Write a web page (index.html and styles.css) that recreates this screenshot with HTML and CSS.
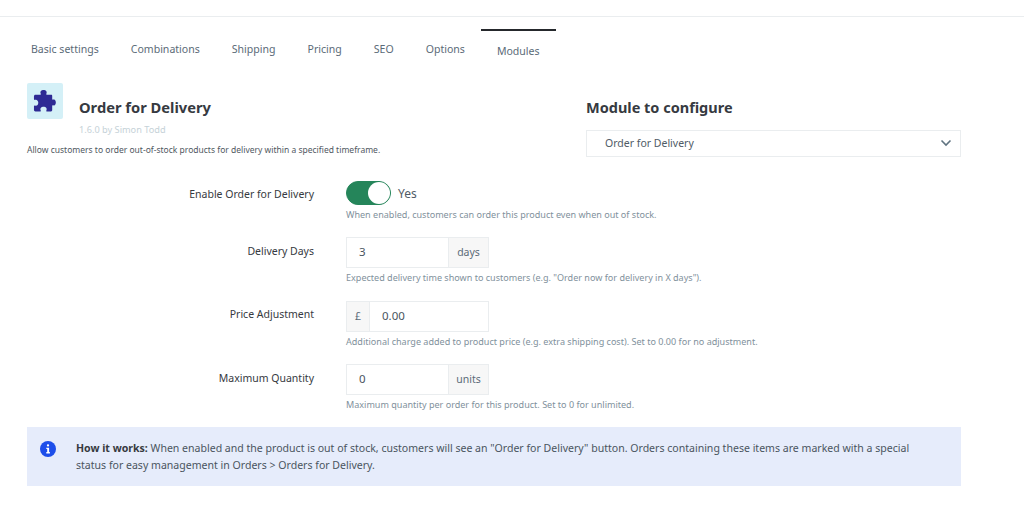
FILE: index.html
```html
<!DOCTYPE html>
<html>
<head>
    <title>Order for Delivery</title>
    <link rel="stylesheet" href="styles.css">
</head>
<body>
    <div class="top-rule"></div>

    <ul class="tabs">
        <li class="tab">Basic settings</li>
        <li class="tab">Combinations</li>
        <li class="tab">Shipping</li>
        <li class="tab">Pricing</li>
        <li class="tab">SEO</li>
        <li class="tab">Options</li>
        <li class="tab tab-active">Modules</li>
    </ul>

    <div class="head-row">
        <div class="module-info">
            <div class="module-title-row">
                <div class="module-logo">
                    <svg width="24" height="24" viewBox="0 0 25 24">
                        <path fill="#2e2a94" d="M2.5 5.5H7.5C8.2 5.5 8.3 4.8 8 4.2C7 2.2 8.8.5 11 .5S15 2.2 14 4.2C13.7 4.8 13.8 5.5 14.5 5.5H19C19.8 5.5 20 6 20 6.8V10C20 10.7 20.6 10.8 21.2 10.5C22.8 9.7 23.8 11.7 23.8 13.5S22.8 17.3 21.2 16.5C20.6 16.2 20 16.3 20 17V21.5C20 22.3 19.500 23 18.800 23H14.500C13.800 23 13.700 22.300 14 21.700C15 19.700 13.200 18 11 18S7 19.700 8 21.700C8.300 22.300 8.200 23 7.500 23H2.500C1.700 23 1 22.300 1 21.500V17.500C1 16.800 1.600 16.500 2.200 16.800C3.800 17.600 5.500 16 5.500 13.800S3.800 10 2.200 10.800C1.600 11.100 1 10.800 1 10V7C1 6.200 1.700 5.500 2.500 5.500Z"/>
                    </svg>
                </div>
                <h2 class="module-name">Order for Delivery</h2>
            </div>
            <div class="module-version">1.6.0 by Simon Todd</div>
            <p class="module-desc">Allow customers to order out-of-stock products for delivery within a specified timeframe.</p>
        </div>
        <div class="module-picker">
            <h2 class="picker-title">Module to configure</h2>
            <div class="picker-select">
                <span>Order for Delivery</span>
                <svg width="12" height="8" viewBox="0 0 12 8">
                    <path d="M1.5 1.5 6 6l4.5-4.5" fill="none" stroke="#5f7380" stroke-width="1.6"/>
                </svg>
            </div>
        </div>
    </div>

    <div class="form-row row-toggle">
        <label class="form-label">Enable Order for Delivery</label>
        <div class="form-field">
            <div class="switch-line">
                <span class="switch"><span class="knob"></span></span>
                <span class="switch-text">Yes</span>
            </div>
            <small class="hint">When enabled, customers can order this product even when out of stock.</small>
        </div>
    </div>

    <div class="form-row">
        <label class="form-label">Delivery Days</label>
        <div class="form-field">
            <div class="input-group">
                <span class="input-value grow">3</span>
                <span class="addon addon-right">days</span>
            </div>
            <small class="hint">Expected delivery time shown to customers (e.g. "Order now for delivery in X days").</small>
        </div>
    </div>

    <div class="form-row row-price">
        <label class="form-label">Price Adjustment</label>
        <div class="form-field">
            <div class="input-group">
                <span class="addon addon-left">£</span>
                <span class="input-value grow">0.00</span>
            </div>
            <small class="hint">Additional charge added to product price (e.g. extra shipping cost). Set to 0.00 for no adjustment.</small>
        </div>
    </div>

    <div class="form-row">
        <label class="form-label">Maximum Quantity</label>
        <div class="form-field">
            <div class="input-group">
                <span class="input-value grow">0</span>
                <span class="addon addon-right">units</span>
            </div>
            <small class="hint">Maximum quantity per order for this product. Set to 0 for unlimited.</small>
        </div>
    </div>

    <div class="info-box">
        <svg class="info-icon" width="16" height="16" viewBox="0 0 16 16">
            <circle cx="8" cy="8" r="8" fill="#1d4eea"/>
            <rect x="6.9" y="3.3" width="2.2" height="2.2" rx="1" fill="#fff"/>
            <path d="M6.3 6.8h2.8v4.3h.8v1.3H6.3v-1.3h.9V8.1h-.9z" fill="#fff"/>
        </svg>
        <p><strong>How it works:</strong> When enabled and the product is out of stock, customers will see an "Order for Delivery" button. Orders containing these items are marked with a special status for easy management in Orders &gt; Orders for Delivery.</p>
    </div>
</body>
</html>
```

FILE: styles.css
```css
body {
    margin: 0;
    padding-top: 16px;
    background: #fff;
    color: #363a41;
    font-family: "Noto Sans", "Open Sans", sans-serif;
    font-size: 10.5px;
}

.top-rule {
    border-top: 1px solid #eaedef;
}

/* Tabs */
.tabs {
    display: flex;
    list-style: none;
    margin: 12px 0 0 15px;
    padding: 0;
}

.tab {
    padding: 10px 16px 0;
    height: 38px;
    box-sizing: border-box;
    color: #5b6b78;
    font-size: 10.55px;
    line-height: 16px;
    border-top: 2px solid transparent;
}

.tab-active {
    padding-top: 12px;
    border-top-color: #25282c;
}

/* Module header */
.head-row {
    display: flex;
    margin: 16px 0 0 27px;
}

.module-info {
    width: 559px;
}

.module-title-row {
    display: flex;
    align-items: flex-end;
}

.module-logo {
    display: flex;
    align-items: center;
    justify-content: center;
    width: 36px;
    height: 36px;
    background: #d4f0f7;
    border-radius: 2px;
}

.module-name {
    margin: 0 0 3px 16px;
    font-size: 14.7px;
    line-height: 18px;
    font-weight: 700;
}

.module-version {
    margin: 5px 0 0 52px;
    color: #c6d2d8;
    font-size: 9.2px;
    line-height: 12px;
}

.module-desc {
    margin: 8px 0 0;
    color: #50585f;
    font-size: 8.5px;
    line-height: 12px;
}

.module-picker {
    width: 375px;
}

.picker-title {
    margin: 14px 0 0;
    font-size: 14.5px;
    line-height: 20px;
    font-weight: 700;
}

.picker-select {
    display: flex;
    align-items: center;
    justify-content: space-between;
    box-sizing: border-box;
    height: 27px;
    margin-top: 13px;
    padding: 0 8px 2px 18px;
    border: 1px solid #eaedef;
    color: #4f5b66;
}

/* Form rows */
.form-row {
    display: flex;
    margin-top: 16px;
}

.row-toggle {
    margin-top: 24px;
}

.row-price {
    margin-top: 17px;
}

.form-label {
    width: 314px;
    padding-top: 6px;
    text-align: right;
    line-height: 16px;
}

.row-toggle .form-label,
.row-price .form-label {
    padding-top: 5px;
}

.form-field {
    margin-left: 32px;
}

.switch-line {
    display: flex;
    align-items: center;
    height: 24px;
}

.switch {
    display: flex;
    justify-content: flex-end;
    align-items: center;
    box-sizing: border-box;
    width: 45px;
    height: 24px;
    background: #25855a;
    border: 1px solid #25855a;
    border-radius: 12px;
}

.knob {
    width: 22px;
    height: 22px;
    background: #fff;
    border-radius: 50%;
}

.switch-text {
    margin-left: 7px;
    font-size: 12px;
    color: #4f5b66;
}

.hint {
    display: block;
    margin-top: 4px;
    color: #7f919c;
    font-size: 9.05px;
    line-height: 12px;
}

.input-group {
    display: flex;
    width: 143px;
    height: 31px;
    box-sizing: border-box;
    border: 1px solid #eaedef;
}

.input-value {
    padding: 0 12px;
    font-size: 11.5px;
    line-height: 28px;
    color: #4a5560;
}

.grow {
    flex: 1;
}

.addon {
    background: #f7f7f7;
    color: #5b6b78;
    line-height: 29px;
    text-align: center;
}

.addon-right {
    width: 39px;
    border-left: 1px solid #eaedef;
}

.addon-left {
    width: 22px;
    border-right: 1px solid #eaedef;
}

/* Info note */
.info-box {
    display: flex;
    box-sizing: border-box;
    width: 934px;
    height: 59px;
    margin: 16px 0 0 27px;
    padding: 14px 30px 0 13px;
    background: #e6ecfb;
}

.info-icon {
    flex: none;
}

.info-box p {
    margin: -1px 0 0 20px;
    font-size: 10.55px;
    line-height: 17px;
    color: #4a5560;
}

.info-box strong {
    color: #363a41;
}
```
